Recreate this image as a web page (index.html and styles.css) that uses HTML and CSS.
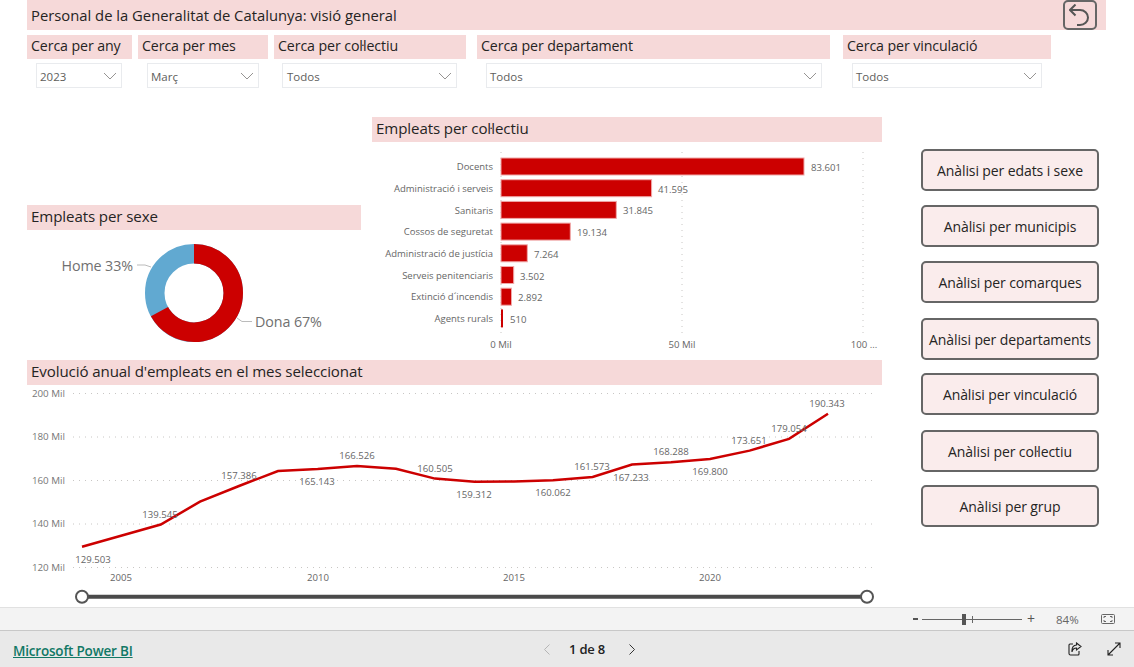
FILE: index.html
```html
<!DOCTYPE html>
<html lang="ca">
<head>
  <meta charset="UTF-8">
  <title>Personal de la Generalitat de Catalunya</title>
  <link rel="stylesheet" href="styles.css">
</head>
<body>
  <div class="report">
    <div class="title-bar">
      <span>Personal de la Generalitat de Catalunya: visió general</span>
      <div class="back-btn">
        <svg width="22" height="22" viewBox="0 0 22 22"><path d="M6.500 .5 1 6l5.500 5.500M1 6h10a8 7.500 0 0 1 0 15H8" fill="none" stroke="#555" stroke-width="2"/></svg>
      </div>
    </div>

    <div class="filters">
      <div class="filter f-any">
        <div class="heading">Cerca per any</div>
        <div class="slicer"><span>2023</span><svg class="chev" viewBox="0 0 14 8"><path d="M1 1l6 6 6-6"/></svg></div>
      </div>
      <div class="filter f-mes">
        <div class="heading">Cerca per mes</div>
        <div class="slicer"><span>Març</span><svg class="chev" viewBox="0 0 14 8"><path d="M1 1l6 6 6-6"/></svg></div>
      </div>
      <div class="filter f-col">
        <div class="heading">Cerca per col·lectiu</div>
        <div class="slicer"><span>Todos</span><svg class="chev" viewBox="0 0 14 8"><path d="M1 1l6 6 6-6"/></svg></div>
      </div>
      <div class="filter f-dep">
        <div class="heading">Cerca per departament</div>
        <div class="slicer"><span>Todos</span><svg class="chev" viewBox="0 0 14 8"><path d="M1 1l6 6 6-6"/></svg></div>
      </div>
      <div class="filter f-vin">
        <div class="heading">Cerca per vinculació</div>
        <div class="slicer"><span>Todos</span><svg class="chev" viewBox="0 0 14 8"><path d="M1 1l6 6 6-6"/></svg></div>
      </div>
    </div>

    <div class="main">
      <div class="charts">
        <div class="top-row">
          <div class="donut-card">
            <div class="heading">Empleats per sexe</div>
            <svg class="chart" width="334" height="130" viewBox="27 230 334 130">
              <circle cx="194" cy="293" r="39.25" fill="none" stroke="#61a9d1" stroke-width="19.5"/>
              <circle cx="194" cy="293" r="39.25" fill="none" stroke="#cc0000" stroke-width="19.5" stroke-dasharray="165.2 246.6" transform="rotate(-90 194 293)"/>
              <path class="leader" d="M137 265h8l6 2M237 318l5 3.5h10"/>
              <text class="donut-label" x="133" y="270.500" text-anchor="end">Home 33%</text>
              <text class="donut-label" x="255" y="326.500">Dona 67%</text>
            </svg>
          </div>

          <div class="bar-card">
            <div class="heading">Empleats per col·lectiu</div>
            <svg class="chart" width="510" height="213" viewBox="372 142 510 213">
              <path class="grid" d="M501 152V335M682 152V335M863 152V335"/>
              <rect class="bar" x="501" y="158" width="303" height="17"/>
              <rect class="bar" x="501" y="179.700" width="150.600" height="17"/>
              <rect class="bar" x="501" y="201.400" width="115.300" height="17"/>
              <rect class="bar" x="501" y="223.100" width="69.300" height="17"/>
              <rect class="bar" x="501" y="244.800" width="26.300" height="17"/>
              <rect class="bar" x="501" y="266.500" width="12.700" height="17"/>
              <rect class="bar" x="501" y="288.200" width="10.500" height="17"/>
              <rect class="bar-thin" x="501" y="309.400" width="2" height="18"/>
              <g class="cat">
                <text x="493" y="170">Docents</text>
                <text x="493" y="191.500">Administració i serveis</text>
                <text x="493" y="213.500">Sanitaris</text>
                <text x="493" y="235">Cossos de seguretat</text>
                <text x="493" y="256.500">Administració de justícia</text>
                <text x="493" y="278.500">Serveis penitenciaris</text>
                <text x="493" y="300">Extinció d´incendis</text>
                <text x="493" y="321.500">Agents rurals</text>
              </g>
              <g class="val">
                <text x="811" y="170.500">83.601</text>
                <text x="658" y="192.500">41.595</text>
                <text x="623" y="214">31.845</text>
                <text x="577" y="236">19.134</text>
                <text x="534" y="258">7.264</text>
                <text x="520" y="279.500">3.502</text>
                <text x="518" y="301">2.892</text>
                <text x="510" y="323">510</text>
              </g>
              <g class="axis">
                <text x="501" y="347.500">0 Mil</text>
                <text x="682" y="347.500">50 Mil</text>
                <text x="864" y="347.500">100 ...</text>
              </g>
            </svg>
          </div>
        </div>

        <div class="line-card">
          <div class="heading">Evolució anual d'empleats en el mes seleccionat</div>
          <svg class="chart" width="855" height="222" viewBox="27 385 855 222">
            <path class="grid" d="M73 393.500H875M73 437H875M73 480.500H875M73 524H875M73 567.500H875"/>
            <g class="ylab">
              <text x="65" y="397">200 Mil</text>
              <text x="65" y="440">180 Mil</text>
              <text x="65" y="484">160 Mil</text>
              <text x="65" y="527">140 Mil</text>
              <text x="65" y="571">120 Mil</text>
            </g>
            <polyline class="trend" points="82,546.700 121,535.800 160.700,524.500 200,501.700 239,486 278,471 317.700,469.100 357,466.100 396,468.700 435,478.600 474.600,481.800 514,481.500 553,480.200 592.600,476.900 632,464.600 671,462.300 710,459 749.600,450.600 789,438.900 828,413.800"/>
            <g class="dlab">
              <text x="93" y="562.500">129.503</text>
              <text x="160" y="518">139.545</text>
              <text x="239" y="479">157.386</text>
              <text x="317" y="485">165.143</text>
              <text x="357" y="459">166.526</text>
              <text x="435" y="472">160.505</text>
              <text x="474" y="498">159.312</text>
              <text x="553" y="496">160.062</text>
              <text x="592" y="470">161.573</text>
              <text x="631" y="481">167.233</text>
              <text x="671" y="455">168.288</text>
              <text x="710" y="475">169.800</text>
              <text x="749" y="444">173.651</text>
              <text x="789" y="432">179.054</text>
              <text x="827" y="407">190.343</text>
            </g>
            <g class="xlab">
              <text x="121" y="581">2005</text>
              <text x="318" y="581">2010</text>
              <text x="514" y="581">2015</text>
              <text x="710" y="581">2020</text>
            </g>
            <path class="track" d="M82 596.700H867"/>
            <circle class="knob" cx="82" cy="596.700" r="6"/>
            <circle class="knob" cx="867" cy="596.700" r="6"/>
          </svg>
        </div>
      </div>

      <div class="nav-buttons">
        <div class="nav-btn">Anàlisi per edats i sexe</div>
        <div class="nav-btn">Anàlisi per municipis</div>
        <div class="nav-btn">Anàlisi per comarques</div>
        <div class="nav-btn nudge">Anàlisi per departaments</div>
        <div class="nav-btn">Anàlisi per vinculació</div>
        <div class="nav-btn nudge">Anàlisi per col·lectiu</div>
        <div class="nav-btn">Anàlisi per grup</div>
      </div>
    </div>
  </div>

  <div class="zoom-bar">
    <span class="zoom-minus"></span>
    <div class="zoom-slider"><span class="zoom-tick"></span><span class="zoom-thumb"></span></div>
    <span class="zoom-plus">+</span>
    <span class="zoom-pct">84%</span>
    <svg class="fit-icon" width="14" height="10" viewBox="0 0 14 10"><rect x=".5" y=".5" width="13" height="9" rx="1" fill="none" stroke="#666"/><path d="M3 4V2.500h2M9 2.500h2V4M3 6v1.500h2M9 7.500h2V6" fill="none" stroke="#666"/></svg>
  </div>

  <div class="footer">
    <a class="brand" href="#">Microsoft Power BI</a>
    <div class="pager">
      <svg class="page-arrow off" width="8" height="11" viewBox="0 0 8 11"><path d="M6.500 .5 1.500 5.500l5 5"/></svg>
      <span class="page-num">1 de 8</span>
      <svg class="page-arrow" width="8" height="11" viewBox="0 0 8 11"><path d="M1.500 .5l5 5-5 5"/></svg>
    </div>
    <div class="foot-icons">
      <svg width="14" height="14" viewBox="0 0 14 14" fill="none" stroke="#222" stroke-width="1.100"><path d="M5 2H2a1 1 0 0 0-1 1v8.500a1.500 1.500 0 0 0 1.500 1.500H10a1 1 0 0 0 1-1V9"/><path d="M8.500 1l4.500 3.500L8.500 8V6C6 6 4.500 7.500 4 10 3.700 6 5.500 3.300 8.500 3z"/></svg>
      <svg width="14" height="14" viewBox="0 0 14 14" fill="none" stroke="#222" stroke-width="1.100"><path d="M1 13 13 1M8 1h5v5M1 8v5h5"/></svg>
    </div>
  </div>
</body>
</html>
```

FILE: styles.css
```css
* {
  box-sizing: border-box;
}

body {
  margin: 0;
  height: 667px;
  overflow: hidden;
  background: white;
  font-family: "Open Sans", "Noto Sans", sans-serif;
  color: #252423;
}

.report {
  height: 607px;
  padding-left: 27px;
  overflow: hidden;
}

.heading {
  height: 24px;
  padding-left: 4px;
  background: #f6d9d9;
  font-size: 14.2px;
  line-height: 22px;
  letter-spacing: -0.1px;
  white-space: nowrap;
}

/* top title */
.title-bar {
  display: flex;
  justify-content: space-between;
  height: 30px;
  margin-right: 28px;
  padding-left: 4px;
  background: #f6d9d9;
  font-size: 14.8px;
  line-height: 30px;
}

.back-btn {
  display: flex;
  align-items: center;
  justify-content: center;
  width: 34px;
  height: 30px;
  margin-right: 9px;
  border: 2px solid #666;
  border-radius: 5px;
}

/* filters */
.filters {
  display: flex;
  margin-top: 5px;
}

.filter {
  flex: none;
}

.f-any { width: 105px; }
.f-mes { width: 130px; margin-left: 6px; }
.f-col { width: 192px; margin-left: 6px; }
.f-dep { width: 353px; margin-left: 11px; }
.f-vin { width: 208px; margin-left: 13px; }

.slicer {
  display: flex;
  align-items: center;
  justify-content: space-between;
  height: 25px;
  margin: 4px 9px 0 9px;
  padding: 1px 3px 0 3px;
  border: 1px solid #e9ebee;
  font-size: 11.5px;
  color: #605e5c;
}

.f-any .slicer { margin-right: 10px; width: 86px; }
.f-mes .slicer { margin-right: 9px; }
.f-col .slicer { margin-left: 8px; margin-right: 9px; padding-left: 4px; }
.f-dep .slicer { margin-right: 8px; }
.f-vin .slicer { margin-right: 9px; }

.chev {
  width: 14px;
  height: 8px;
  margin-right: 1px;
  fill: none;
  stroke: #8a8886;
  stroke-width: 0.9;
}

/* main area */
.main {
  display: flex;
}

.charts {
  flex: none;
  width: 855px;
}

.top-row {
  display: flex;
  height: 272px;
}

.donut-card {
  flex: none;
  width: 334px;
  padding-top: 117px;
}

.bar-card {
  flex: none;
  width: 510px;
  margin-left: 11px;
  padding-top: 29px;
}

.donut-card .heading,
.bar-card .heading,
.line-card .heading {
  height: 25px;
  font-size: 15.1px;
  line-height: 23px;
}

.chart {
  display: block;
  font-family: "Open Sans", "Noto Sans", sans-serif;
}

.grid {
  fill: none;
  stroke: #c8c6c4;
  stroke-width: 1;
  stroke-dasharray: 1 5;
}

.leader {
  fill: none;
  stroke: #bbb;
  stroke-width: 1;
}

.donut-label {
  font-size: 14.3px;
  letter-spacing: -0.1px;
  fill: #707070;
}

.bar {
  fill: #cc0000;
  stroke: #f0a8a8;
  stroke-width: 1;
}

.bar-thin {
  fill: #cc0000;
}

.cat text {
  font-size: 9.5px;
  text-anchor: end;
  fill: #666;
}

.val text {
  font-size: 9.6px;
  fill: #666;
}

.axis text,
.xlab text,
.dlab text {
  font-size: 9.6px;
  text-anchor: middle;
  fill: #666;
}

.ylab text {
  font-size: 9.8px;
  text-anchor: end;
  fill: #777;
}

.trend {
  fill: none;
  stroke: #cc0000;
  stroke-width: 2.5;
}

.track {
  fill: none;
  stroke: #4a4a4a;
  stroke-width: 4;
}

.knob {
  fill: white;
  stroke: #555;
  stroke-width: 2;
}

/* right column */
.nav-buttons {
  flex: none;
  display: flex;
  flex-direction: column;
  gap: 14px;
  width: 178px;
  margin-left: 39px;
  padding-top: 61px;
}

.nav-btn {
  display: flex;
  align-items: center;
  justify-content: center;
  height: 42px;
  background: #faecec;
  border: 2px solid #666;
  border-radius: 5px;
  font-size: 14px;
  letter-spacing: -0.1px;
  white-space: nowrap;
}

.nav-btn.nudge {
  margin-top: 1px;
  margin-bottom: -1px;
}

/* bottom bars */
.zoom-bar {
  display: flex;
  align-items: center;
  height: 24px;
  padding-left: 913px;
  background: #f3f3f3;
  border-top: 1px solid #e1e1e1;
  border-bottom: 1px solid #c8c8c8;
}

.zoom-minus {
  width: 5px;
  height: 2px;
  background: #555;
}

.zoom-slider {
  position: relative;
  width: 100px;
  height: 1px;
  margin-left: 4px;
  background: #666;
}

.zoom-tick {
  position: absolute;
  left: 50px;
  top: -3px;
  width: 1px;
  height: 7px;
  background: #666;
}

.zoom-thumb {
  position: absolute;
  left: 40px;
  top: -5px;
  width: 4px;
  height: 11px;
  background: #555;
}

.zoom-plus {
  margin-left: 5px;
  font-size: 14px;
  line-height: 14px;
  color: #555;
}

.zoom-pct {
  margin-left: 21px;
  font-size: 11.5px;
  color: #666;
}

.fit-icon {
  margin-left: 22px;
}

.footer {
  display: flex;
  align-items: center;
  height: 36px;
  padding-left: 13px;
  background: #e9e9e9;
}

.brand {
  width: 120px;
  padding-top: 3px;
  font-size: 13.5px;
  font-weight: 600;
  letter-spacing: -0.2px;
  color: #117865;
  white-space: nowrap;
}

.pager {
  display: flex;
  align-items: center;
  margin-left: 410px;
}

.page-arrow {
  fill: none;
  stroke: #333;
  stroke-width: 1;
}

.page-arrow.off {
  stroke: #b5b5b5;
}

.page-num {
  width: 38px;
  margin: 0 21px 0 18px;
  font-size: 13px;
  font-weight: 600;
  letter-spacing: -0.2px;
  white-space: nowrap;
  color: #222;
}

.foot-icons {
  display: flex;
  gap: 25px;
  margin-left: 432px;
}
```
